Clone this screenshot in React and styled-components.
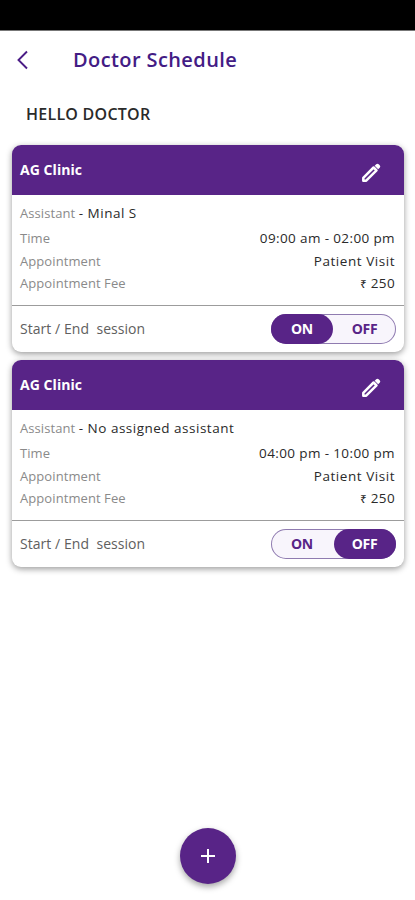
import React from 'react';
import styled, { createGlobalStyle } from 'styled-components';

const GlobalStyle = createGlobalStyle`
  * {
    box-sizing: border-box;
  }
  body {
    margin: 0;
    background: #fff;
    font-family: 'Open Sans', 'Noto Sans', sans-serif;
  }
  button {
    font-family: inherit;
    border: none;
    padding: 0;
    background: none;
    cursor: pointer;
  }
`;

const Screen = styled.div`
  display: flex;
  flex-direction: column;
  height: 900px;
  overflow: hidden;
`;

const StatusBar = styled.div`
  flex: none;
  height: 31px;
  background: #000;
  border-bottom: 1px solid #777;
`;

const TopBar = styled.header`
  display: flex;
  align-items: center;
  height: 59px;
  padding: 0 0 2px 16px;
`;

const BackButton = styled.button`
  display: flex;
  width: 57px;
  color: #4b1c86;
`;

const Title = styled.h1`
  margin: 0;
  font-size: 20px;
  line-height: 28px;
  font-weight: 600;
  letter-spacing: 0.4px;
  color: #431c85;
`;

const Greeting = styled.h2`
  margin: 12px 0 19px 26px;
  font-size: 16px;
  line-height: 24px;
  font-weight: 600;
  letter-spacing: 0.25px;
  color: #2a2a2a;
`;

const CardList = styled.main`
  display: flex;
  flex-direction: column;
  gap: 8px;
  padding: 0 11px 0 12px;
`;

const Card = styled.section`
  height: 207px;
  border-radius: 9px;
  background: #fff;
  box-shadow: 0 2px 6px rgba(0, 0, 0, 0.4);
  overflow: hidden;
`;

const CardHeader = styled.div`
  display: flex;
  align-items: center;
  justify-content: space-between;
  height: 50px;
  padding: 0 21px 0 8px;
  background: #582487;
  color: #fff;
`;

const ClinicName = styled.h3`
  margin: 0;
  font-size: 14px;
  line-height: 20px;
  font-weight: 700;
  letter-spacing: 0.05px;
`;

const EditButton = styled.button`
  display: flex;
  margin-top: 6px;
  color: #fff;
`;

const Details = styled.div`
  height: 111px;
  padding: 7px 9px 0 8px;
  border-bottom: 1px solid #9c9c9c;
`;

const Row = styled.div`
  display: flex;
  justify-content: space-between;
  height: ${(props) => props.$height || 23}px;
  font-size: 13px;
  line-height: 22px;
`;

const Label = styled.span`
  color: #8a8a8a;
  letter-spacing: 0.08px;
`;

const Value = styled.span`
  color: #2a2a2a;
  font-size: 13.5px;
  font-weight: 500;
  letter-spacing: ${(props) => props.$spacing || 0.38}px;
`;

const Rupee = styled.span`
  font-size: 11px;
`;

const CardFooter = styled.div`
  display: flex;
  align-items: center;
  justify-content: space-between;
  height: 45px;
  padding: 0 8px;
`;

const SessionLabel = styled.span`
  font-size: 14px;
  letter-spacing: 0.05px;
  color: #606060;
  white-space: pre;
`;

const Toggle = styled.div`
  display: flex;
  justify-content: space-between;
  width: 125px;
  height: 30px;
  border-radius: 15px;
  background: #f8f5fc;
  box-shadow: inset 0 0 0 1px #8f7bb0;
`;

const ToggleOption = styled.button`
  width: 62px;
  border-radius: 15px;
  font-size: 14px;
  font-weight: 700;
  letter-spacing: -0.3px;
  color: ${(props) => (props.$active ? '#fff' : '#582487')};
  background: ${(props) => (props.$active ? '#582487' : 'transparent')};

  &:last-child {
    padding-right: 1px;
  }
`;

const BottomBar = styled.footer`
  display: flex;
  justify-content: center;
  margin-top: auto;
  padding-bottom: 16px;
`;

const AddButton = styled.button`
  display: flex;
  align-items: center;
  justify-content: center;
  width: 56px;
  height: 56px;
  border-radius: 50%;
  background: #582487;
  box-shadow: 0 3px 6px rgba(0, 0, 0, 0.35);
`;

const schedules = [
  { id: 1, assistant: 'Minal S', time: '09:00 am - 02:00 pm', on: true },
  {
    id: 2,
    assistant: 'No assigned assistant',
    time: '04:00 pm - 10:00 pm',
    on: false,
  },
];

const PencilIcon = () => (
  <svg width='24' height='24' viewBox='0 0 24 24' fill='none'>
    <path
      d='M4.300 19.700v-2.900L14.600 6.500l2.900 2.900L7.200 19.700z'
      stroke='currentColor'
      strokeWidth='2.500'
      strokeLinejoin='round'
    />
    <path
      d='M15.700 4.800l1.500-1.500a1.800 1.800 0 0 1 2.500 0l1 1a1.800 1.800 0 0 1 0 2.500L19.200 8.300z'
      fill='currentColor'
    />
  </svg>
);

const ScheduleCard = ({ assistant, time, on }) => {
  return (
    <Card>
      <CardHeader>
        <ClinicName>AG Clinic</ClinicName>
        <EditButton aria-label='Edit'>
          <PencilIcon />
        </EditButton>
      </CardHeader>
      <Details>
        <Row $height={25}>
          <span>
            <Label>Assistant </Label>
            <Value $spacing={0.5}>- {assistant}</Value>
          </span>
        </Row>
        <Row>
          <Label>Time</Label>
          <Value>{time}</Value>
        </Row>
        <Row $height={22}>
          <Label>Appointment</Label>
          <Value $spacing={0.55}>Patient Visit</Value>
        </Row>
        <Row>
          <Label>Appointment Fee</Label>
          <Value>
            <Rupee>₹</Rupee> 250
          </Value>
        </Row>
      </Details>
      <CardFooter>
        <SessionLabel>{'Start / End  session'}</SessionLabel>
        <Toggle>
          <ToggleOption $active={on}>ON</ToggleOption>
          <ToggleOption $active={!on}>OFF</ToggleOption>
        </Toggle>
      </CardFooter>
    </Card>
  );
};

const App = () => {
  return (
    <Screen>
      <GlobalStyle />
      <StatusBar />
      <TopBar>
        <BackButton aria-label='Back'>
          <svg width='14' height='20' viewBox='0 0 14 20' fill='none'>
            <path d='M11 1.500L2.500 10l8.500 8.500' stroke='currentColor' strokeWidth='1.900' />
          </svg>
        </BackButton>
        <Title>Doctor Schedule</Title>
      </TopBar>
      <Greeting>HELLO DOCTOR</Greeting>
      <CardList>
        {schedules.map((item) => (
          <ScheduleCard key={item.id} {...item} />
        ))}
      </CardList>
      <BottomBar>
        <AddButton aria-label='Add'>
          <svg width='16' height='16' viewBox='0 0 16 16'>
            <path d='M8 1v14M1 8h14' stroke='#fff' strokeWidth='2' />
          </svg>
        </AddButton>
      </BottomBar>
    </Screen>
  );
};

export default App;
